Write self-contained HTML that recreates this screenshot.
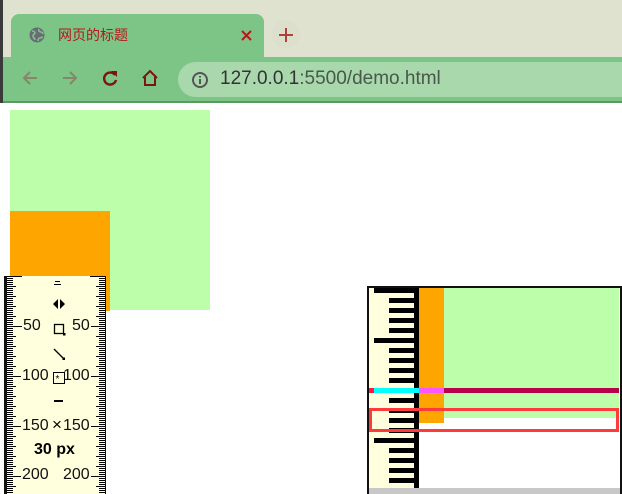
<!DOCTYPE html>
<html><head><meta charset="utf-8"><style>
*{margin:0;padding:0;box-sizing:border-box}
body{width:622px;height:494px;overflow:hidden;background:#fff;position:relative;font-family:"Liberation Sans","Noto Sans CJK SC",sans-serif}
.a{position:absolute}
.lbl{position:absolute;font-size:16px;color:#111;line-height:16px;background:#fffedd;padding:0 1px}
</style></head><body>
<div class="a" style="left:0;top:0;width:622px;height:57px;background:#e0e2d0"></div>
<div class="a" style="left:0;top:0;width:3px;height:103px;background:#3a3a3a"></div>
<div class="a" style="left:11px;top:14px;width:253px;height:50px;background:#7dc487;border-radius:8px 8px 0 0"></div>
<div class="a" style="left:3px;top:47px;width:8px;height:10px;background:#e0e2d0;border-radius:0 0 8px 0"></div>
<div class="a" style="left:264px;top:47px;width:10px;height:10px;background:#e0e2d0;border-radius:0 0 0 8px"></div>
<svg class="a" style="left:29px;top:27px" width="16" height="16" viewBox="0 0 16 16"><circle cx="8" cy="8" r="7.5" fill="#6b6b78"/><path d="M3 4c2 0 3 1 3 2s-2 1-2 3 2 2 2 4M10 2c-1 2 1 3 2 3s2 1 2 2M9 14c0-2 1-3 2-3s2-1 3-1" stroke="#7dc487" stroke-width="1.6" fill="none"/></svg>
<div class="a" style="left:58px;top:27px;font-size:14px;color:#b21b1b;line-height:16px">网页的标题</div>
<svg class="a" style="left:241px;top:30px" width="11" height="11"><path d="M1 1l9 9M10 1l-9 9" stroke="#b21b1b" stroke-width="2"/></svg>
<div class="a" style="left:272px;top:20px;width:28px;height:28px;border-radius:14px;background:#dcdfcc"></div>
<svg class="a" style="left:279px;top:28px" width="14" height="14"><path d="M7 0v14M0 7h14" stroke="#b04040" stroke-width="2"/></svg>
<div class="a" style="left:3px;top:57px;width:619px;height:45px;background:#7dc487"></div>
<div class="a" style="left:3px;top:101px;width:619px;height:2px;background:#5a9a62"></div>
<svg class="a" style="left:20px;top:68px" width="20" height="20" viewBox="0 0 20 20"><path d="M17 10H4M10 4l-6 6 6 6" stroke="#86866a" stroke-width="2" fill="none"/></svg>
<svg class="a" style="left:60px;top:68px" width="20" height="20" viewBox="0 0 20 20"><path d="M3 10h13M10 4l6 6-6 6" stroke="#86866a" stroke-width="2" fill="none"/></svg>
<svg class="a" style="left:100px;top:68px" width="20" height="20" viewBox="0 0 20 20"><path d="M15 7A6 6 0 1 0 16 12" stroke="#7a1515" stroke-width="2.4" fill="none"/><path d="M11 3h6v6z" fill="#7a1515"/></svg>
<svg class="a" style="left:140px;top:68px" width="20" height="20" viewBox="0 0 20 20"><path d="M3 10L10 3l7 7M5 9v8h10V9" stroke="#7a1515" stroke-width="2" fill="none"/></svg>
<div class="a" style="left:178px;top:62px;width:460px;height:35px;border-radius:18px;background:#a8d8ac"></div>
<svg class="a" style="left:191px;top:71px" width="18" height="18" viewBox="0 0 18 18"><circle cx="9" cy="9" r="7" stroke="#555" stroke-width="2" fill="none"/><path d="M9 8v5M9 5v1.5" stroke="#555" stroke-width="2"/></svg>
<div class="a" style="left:220px;top:68px;font-size:19px;color:#333;line-height:22px">127.0.0.1<span style="color:#48584a">:5500/demo.html</span></div>

<div class="a" style="left:10px;top:110px;width:200px;height:200px;background:#bcfeaa"></div>
<div class="a" style="left:10px;top:211px;width:100px;height:100px;background:#ffa500"></div>

<div class="a" style="left:4px;top:276px;width:102px;height:218px;background:#fffedd;border-left:3px solid #111;border-right:1px solid #111;overflow:hidden">
<div class="a" style="left:0;top:0;width:6px;height:218px;background:repeating-linear-gradient(#000 0 1px,transparent 1px 2px)"></div>
<div class="a" style="left:0;top:0;width:9px;height:218px;background:repeating-linear-gradient(#000 0 1px,transparent 1px 10px)"></div>
<div class="a" style="left:0;top:0;width:15px;height:218px;background:repeating-linear-gradient(#000 0 1px,transparent 1px 50px)"></div>
<div class="a" style="right:0;top:0;width:6px;height:218px;background:repeating-linear-gradient(#000 0 1px,transparent 1px 2px)"></div>
<div class="a" style="right:0;top:0;width:9px;height:218px;background:repeating-linear-gradient(#000 0 1px,transparent 1px 10px)"></div>
<div class="a" style="right:0;top:0;width:15px;height:218px;background:repeating-linear-gradient(#000 0 1px,transparent 1px 50px)"></div>
</div>
<div class="lbl" style="left:22px;top:318px">50</div><div class="lbl" style="left:71px;top:318px">50</div>
<div class="lbl" style="left:21px;top:368px">100</div><div class="lbl" style="left:62px;top:368px">100</div>
<div class="lbl" style="left:21px;top:418px">150</div><div class="lbl" style="left:62px;top:418px">150</div>
<div class="lbl" style="left:21px;top:467px">200</div><div class="lbl" style="left:62px;top:467px">200</div>
<div class="a" style="left:55px;top:281px;width:5px;height:1px;background:#000"></div>
<div class="a" style="left:54px;top:284px;width:7px;height:1px;background:#000"></div>
<svg class="a" style="left:52px;top:298px" width="14" height="12"><path d="M6 1L1 6l5 5zM8 1l5 5-5 5z" fill="#000"/></svg>
<svg class="a" style="left:52px;top:322px" width="14" height="14"><rect x="2.5" y="2.5" width="9" height="9" fill="none" stroke="#000" stroke-width="1.3"/><rect x="11" y="11" width="2.5" height="2.5"/></svg>
<svg class="a" style="left:52px;top:347px" width="14" height="14"><path d="M2 2l10 10" stroke="#000" stroke-width="1.3"/><rect x="10.5" y="10.5" width="2.5" height="2.5"/></svg>
<svg class="a" style="left:52px;top:371px" width="14" height="14"><rect x="1.5" y="1.5" width="11" height="11" fill="#fffedd" stroke="#000"/><text x="3.5" y="11" font-size="10" font-family="Liberation Sans">*</text></svg>
<div class="a" style="left:54px;top:400px;width:9px;height:2px;background:#000"></div>
<div class="a" style="left:52px;top:417px;font-size:17px;line-height:16px;background:#fffedd">×</div>
<div class="a" style="left:34px;top:442px;font-size:16px;font-weight:bold;line-height:16px">30 px</div>

<div class="a" style="left:367px;top:286px;width:255px;height:208px;border:2px solid #111;border-bottom:none;background:#fff;overflow:hidden">
<div class="a" style="left:0;top:0;width:50px;height:206px;background:#fffedd"></div>
<div class="a" style="left:45px;top:0;width:5px;height:206px;background:#000"></div>
<div class="a" style="left:20px;top:0;width:30px;height:206px;background:repeating-linear-gradient(#000 0 5px,transparent 5px 10px)"></div>
<div class="a" style="left:5px;top:0;width:45px;height:206px;background:repeating-linear-gradient(#000 0 5px,transparent 5px 50px)"></div>
<div class="a" style="left:50px;top:0;width:25px;height:135px;background:#ffa500"></div>
<div class="a" style="left:75px;top:0;width:175px;height:130px;background:#bcfeaa"></div>
<div class="a" style="left:0;top:100px;width:250px;height:5px;background:#b8004a"></div>
<div class="a" style="left:0;top:100px;width:5px;height:5px;background:#ff1a3a"></div>
<div class="a" style="left:5px;top:100px;width:45px;height:5px;background:#00ffff"></div>
<div class="a" style="left:50px;top:100px;width:25px;height:5px;background:#ff55ff"></div>
<div class="a" style="left:0;top:120px;width:250px;height:24px;border:3px solid #ff3a3a"></div>
<div class="a" style="left:0;top:200px;width:253px;height:8px;background:#c8c8c8"></div>
</div>
</body></html>
